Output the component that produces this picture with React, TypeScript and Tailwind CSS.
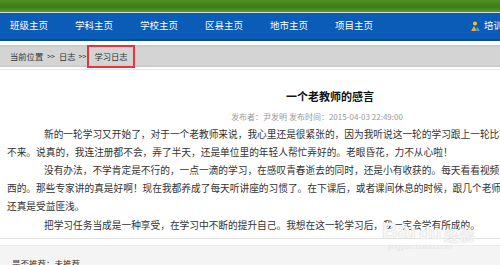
import React from "react";

const navItems = ["班级主页", "学科主页", "学校主页", "区县主页", "地市主页", "项目主页"];

const lines: { text: string; indent?: boolean }[] = [
  { text: "新的一轮学习又开始了，对于一个老教师来说，我心里还是很紧张的，因为我听说这一轮的学习跟上一轮比较，难度加大了很多，我怕自己跟", indent: true },
  { text: "不来。说真的，我连注册都不会，弄了半天，还是单位里的年轻人帮忙弄好的。老眼昏花，力不从心啦！" },
  { text: "没有办法，不学肯定是不行的，一点一滴的学习，在感叹青春逝去的同时，还是小有收获的。每天看看视频，听听讲座，学到了不少东", indent: true },
  { text: "西的。那些专家讲的真是好啊！现在我都养成了每天听讲座的习惯了。在下课后，或者课间休息的时候，跟几个老师交流交流，" },
  { text: "还真是受益匪浅。" },
  { text: "把学习任务当成是一种享受，在学习中不断的提升自己。我想在这一轮学习后，我一定会学有所成的。", indent: true },
];

export default function App() {
  return (
    <div
      className="relative w-[500px] h-[265px] overflow-hidden bg-white"
      style={{ fontFamily: '"Noto Sans CJK SC", "Liberation Sans", sans-serif' }}
    >
      <div className="w-[660px]">
        {/* green banner */}
        <div className="h-[12px] bg-[linear-gradient(180deg,#4f8f22_0%,#3f7d18_60%,#5c9a2c_100%)]" />
        <div className="h-[1px] bg-[#cfe0ef]" />
        {/* nav */}
        <div className="h-[28px] bg-[#0b5cb6] border-b-[2px] border-[#0a4c95] flex items-center pl-[10px] text-white text-[9.5px] leading-none">
          {navItems.map((n) => (
            <span key={n} className="w-[65px] shrink-0">{n}</span>
          ))}
          <span className="ml-[70px] flex items-center gap-[4px]">
            <svg width="10" height="10" viewBox="0 0 10 10">
              <circle cx="5" cy="2.5" r="2" fill="#f5c518" />
              <path d="M1 10 L4 5 L7 10 Z" fill="#f5a818" />
              <path d="M5 10 L7.5 6 L10 10 Z" fill="#3aa0e8" />
            </svg>
            <span>培训</span>
          </span>
        </div>
        <div className="h-[4px]" />
        {/* breadcrumb */}
        <div className="h-[22px] bg-[linear-gradient(180deg,#c8c8c8_0%,#d4d4d4_15%,#d4d4d4_90%,#c4c4c4_100%)] flex items-center pl-[10px] text-[8.3px] text-[#333] leading-none">
          <span>当前位置</span>
          <span className="ml-[4px] text-[7px]">&gt;&gt;</span>
          <span className="ml-[4px]">日志</span>
          <span className="ml-[3px] text-[7px]">&gt;&gt;</span>
          <span className="ml-[1px] -my-[1px] h-[23px] flex items-center px-[5px] border-[2px] border-[#e8333a]">学习日志</span>
        </div>
        <div className="h-[2px]" />
        <div className="h-[1px] bg-[#e6e6e6]" />
        {/* title */}
        <div className="pt-[19px] text-center text-[11px] font-bold text-[#111] leading-[14px]">一个老教师的感言</div>
        <div className="mt-[9px] text-center pr-[26px] text-[8px] text-[#9a9a9a] leading-[10px]">发布者：尹发明 发布时间：2015-04-03 22:49:00</div>
        {/* body */}
        <div className="mt-[3px] pl-[7px] text-[9.7px] text-[#333] leading-[18px]">
          {lines.map((l, i) => (
            <div
              key={i}
              className={`whitespace-nowrap ${l.indent ? "pl-[37px]" : ""} ${i === 5 ? "mt-[1px]" : ""}`}
            >
              {l.text}
            </div>
          ))}
        </div>
        <div className="mt-[4px] h-[1px] bg-[#e2e2e2]" />
        <div className="mt-[6px] h-[40px] bg-[#f4f4f4] border-t border-[#ececec] pl-[12px] pt-[13px] text-[8.5px] text-[#333] leading-none">
          是否推荐：未推荐
        </div>
      </div>
      {/* watermark */}
      <div className="absolute left-[382px] top-[220px] flex flex-col items-start pointer-events-none">
        <div className="flex items-end gap-[3px] leading-none">
          <span className="text-[22px] font-bold text-white/80 [text-shadow:0_0_1px_#d0d0d0,0_0_1px_#d0d0d0]" style={{ fontFamily: '"Liberation Sans", sans-serif' }}>Bai</span>
          <span className="text-[18px] font-bold text-white/80 [text-shadow:0_0_1px_#d0d0d0,0_0_1px_#d0d0d0]" style={{ fontFamily: '"Liberation Sans", sans-serif' }}>du</span>
          <span className="text-[15px] font-bold text-white/80 [text-shadow:0_0_1px_#d0d0d0,0_0_1px_#d0d0d0]">经验</span>
        </div>
        <span className="ml-[6px] mt-[1px] text-[8px] text-[#e6e6e6] leading-none" style={{ fontFamily: '"Liberation Sans", sans-serif' }}>jingyan.baidu.com</span>
      </div>
    </div>
  );
}
